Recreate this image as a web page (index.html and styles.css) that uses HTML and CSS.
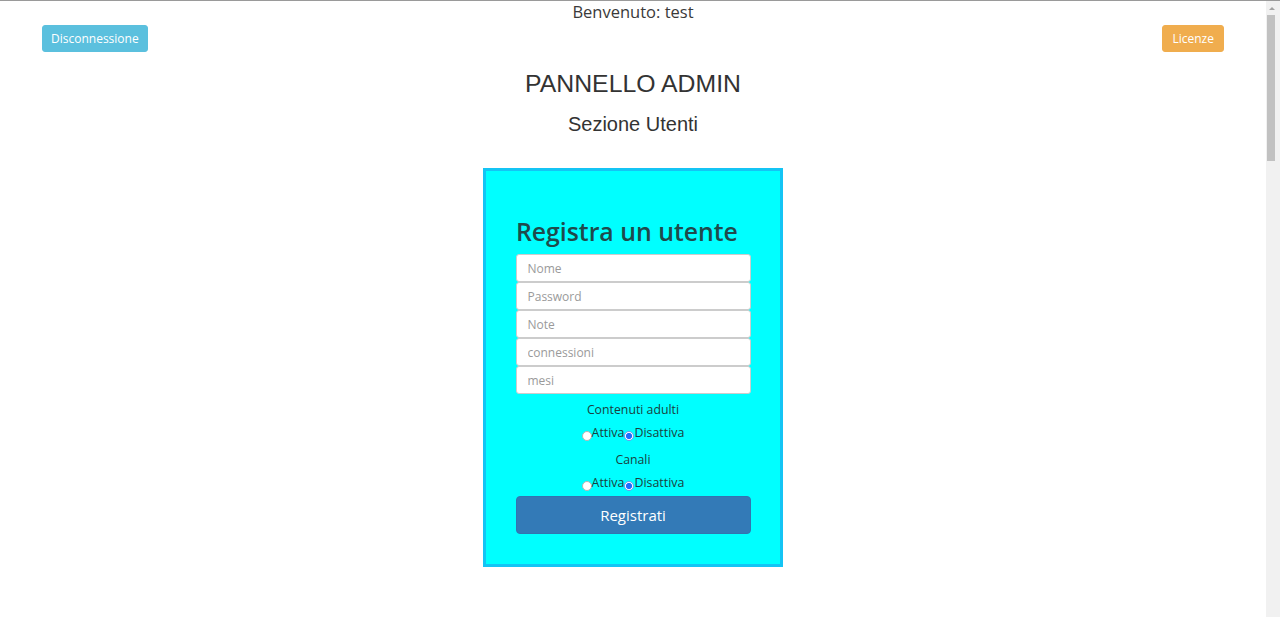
FILE: index.html
```html
<!DOCTYPE html>
<html lang="it">
<head>
<meta charset="utf-8">
<title>Pannello Admin</title>
<link rel="stylesheet" href="styles.css">
</head>
<body>
<div class="page">
  <div class="welcome">Benvenuto: test</div>
  <div class="actions">
    <button class="btn btn-info" type="button">Disconnessione</button>
    <button class="btn btn-warning" type="button">Licenze</button>
  </div>
  <h1 class="title">PANNELLO ADMIN</h1>
  <h2 class="subtitle">Sezione Utenti</h2>
  <form class="register-box">
    <h3 class="register-title">Registra un utente</h3>
    <div class="fields">
      <input class="field" type="text" placeholder="Nome">
      <input class="field" type="password" placeholder="Password">
      <input class="field" type="text" placeholder="Note">
      <input class="field" type="text" placeholder="connessioni">
      <input class="field" type="text" placeholder="mesi">
    </div>
    <div class="opt-label first">Contenuti adulti</div>
    <div class="opt-row"><input class="radio" type="radio" name="adulti" value="1">Attiva<input class="radio" type="radio" name="adulti" value="0" checked>Disattiva</div>
    <div class="opt-label">Canali</div>
    <div class="opt-row"><input class="radio" type="radio" name="canali" value="1">Attiva<input class="radio" type="radio" name="canali" value="0" checked>Disattiva</div>
    <button class="btn-submit" type="button">Registrati</button>
  </form>
</div>
<div class="scrollbar" aria-hidden="true">
  <div class="scroll-arrow"></div>
  <div class="scroll-thumb"></div>
</div>
</body>
</html>
```
FILE: styles.css
```css
body {
  margin: 0;
  padding-right: 14px;
  font-family: "Open Sans", "Liberation Sans", sans-serif;
  color: #333;
  background: #fff;
  border-top: 1px solid #9a9a9a;
}
.page {
  display: flex;
  flex-direction: column;
  align-items: center;
}
.welcome {
  font-size: 16.5px;
  line-height: 22px;
  color: #3a3a3a;
  text-align: center;
}
.actions {
  align-self: stretch;
  display: flex;
  justify-content: space-between;
  padding: 0 42px;
  margin-top: 2px;
}
.btn {
  font-family: "Open Sans", sans-serif;
  font-size: 12px;
  height: 27px;
  line-height: 25px;
  padding: 0 8px;
  color: #fff;
  border: 1px solid transparent;
  border-radius: 3px;
  cursor: pointer;
}
.btn-info {
  background: #5bc0de;
  border-color: #5bc0de;
}
.btn-warning {
  background: #f0ad4e;
  border-color: #f0ad4e;
  padding: 0 9px;
}
.title {
  font-family: "Liberation Sans", Arial, sans-serif;
  font-weight: normal;
  font-size: 24.8px;
  line-height: 26px;
  margin: 19px 0 0;
  color: #333;
}
.subtitle {
  font-family: "Liberation Sans", Arial, sans-serif;
  font-weight: normal;
  font-size: 20px;
  line-height: 24px;
  margin: 15px 0 0;
  color: #333;
}
.register-box {
  margin-top: 32px;
  margin-bottom: 40px;
  width: 294px;
  box-sizing: content-box;
  padding: 45px 0 30px;
  background: #00ffff;
  border: 3px solid #14c4f4;
  display: flex;
  flex-direction: column;
  align-items: center;
}
.register-title {
  width: 235px;
  margin: 0;
  font-size: 24.8px;
  line-height: 30px;
  font-weight: 600;
  color: #1f4a4c;
  white-space: nowrap;
  padding-left: 1px;
}
.fields {
  margin-top: 8px;
  display: flex;
  flex-direction: column;
}
.field {
  box-sizing: border-box;
  width: 235px;
  height: 28px;
  margin: 0;
  padding: 0 11px;
  border: 1px solid #ccc;
  border-radius: 3px;
  background: #fff;
  font-family: "Open Sans", sans-serif;
  font-size: 12px;
  color: #555;
  outline: none;
}
.field::placeholder {
  color: #9a9a9a;
}
.opt-label {
  font-size: 12.3px;
  line-height: 18px;
  margin-top: 9px;
  text-align: center;
  color: #1b3f40;
}
.opt-label.first {
  margin-top: 7px;
}
.opt-row {
  font-size: 12.4px;
  line-height: 18px;
  margin-top: 5px;
  text-align: center;
  color: #1b3f40;
}
.radio {
  -webkit-appearance: none;
  appearance: none;
  width: 10px;
  height: 10px;
  margin: 0;
  border: 1px solid #b5b5b5;
  border-radius: 50%;
  background: #fff;
  vertical-align: -4px;
}
.radio:checked {
  border-color: #6f9cf0;
  background: radial-gradient(circle, #1f6bff 0 2.8px, #fff 3.3px);
}
.btn-submit {
  margin-top: 4px;
  width: 235px;
  height: 38px;
  border: 1px solid #3274b0;
  border-radius: 4px;
  background: #337ab7;
  color: #fff;
  font-family: "Open Sans", sans-serif;
  font-size: 15px;
  cursor: pointer;
}
.scrollbar {
  position: fixed;
  top: 1px;
  right: 0;
  bottom: 0;
  width: 14px;
  background: #f1f1f1;
}
.scroll-arrow {
  position: absolute;
  top: 6px;
  left: 3px;
  width: 0;
  height: 0;
  border-left: 3px solid transparent;
  border-right: 3px solid transparent;
  border-bottom: 3px solid #a3a3a3;
}
.scroll-thumb {
  position: absolute;
  top: 14px;
  left: 1px;
  width: 8px;
  height: 146px;
  background: #c1c1c1;
}
```
